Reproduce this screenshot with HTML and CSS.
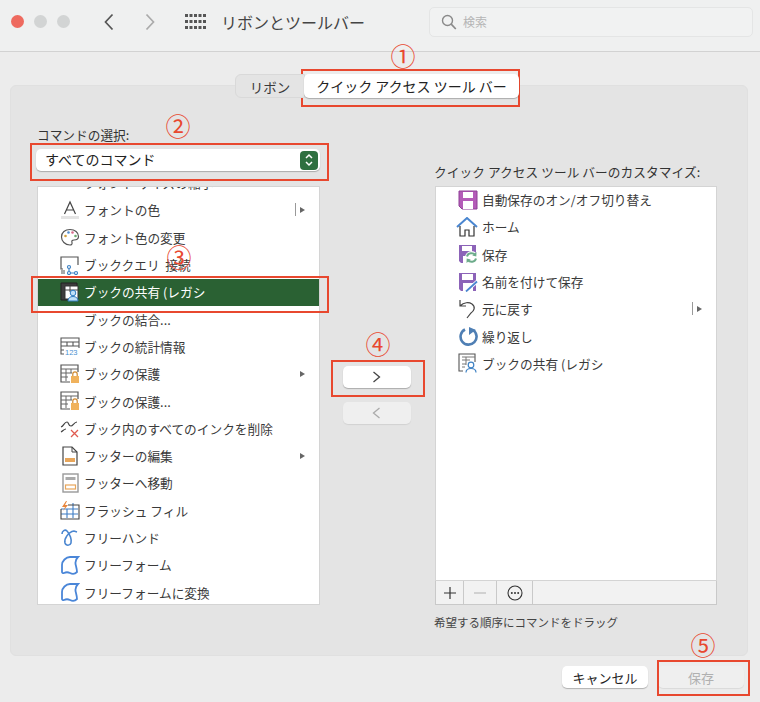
FILE: index.html
```html
<!DOCTYPE html>
<html lang="ja">
<head>
    <meta charset="UTF-8">
    <meta name="viewport" content="width=device-width, initial-scale=1.0">
    <title>リボンとツールバー</title>
    <link rel="stylesheet" href="styles.css">
</head>
<body>
    <header class="titlebar">
        <div class="lights">
            <span class="light light-red"></span>
            <span class="light"></span>
            <span class="light"></span>
        </div>
        <svg class="nav nav-back" width="12" height="18" viewBox="0 0 12 18"><path d="M9.5 1.5 2.5 9l7 7.5" fill="none" stroke="#555" stroke-width="1.7"/></svg>
        <svg class="nav nav-next" width="12" height="18" viewBox="0 0 12 18"><path d="M2.5 1.5 9.5 9l-7 7.5" fill="none" stroke="#aaa" stroke-width="1.7"/></svg>
        <svg class="grid-icon" width="21" height="15" viewBox="0 0 21 15" fill="#555">
            <rect x="0" y="0" width="3" height="3"/><rect x="4.5" y="0" width="3" height="3"/><rect x="9" y="0" width="3" height="3"/><rect x="13.5" y="0" width="3" height="3"/><rect x="18" y="0" width="3" height="3"/>
            <rect x="0" y="6" width="3" height="3"/><rect x="4.5" y="6" width="3" height="3"/><rect x="9" y="6" width="3" height="3"/><rect x="13.5" y="6" width="3" height="3"/><rect x="18" y="6" width="3" height="3"/>
            <rect x="0" y="12" width="3" height="3"/><rect x="4.5" y="12" width="3" height="3"/><rect x="9" y="12" width="3" height="3"/><rect x="13.5" y="12" width="3" height="3"/><rect x="18" y="12" width="3" height="3"/>
        </svg>
        <h1 class="title">リボンとツールバー</h1>
        <div class="search">
            <svg width="16" height="16" viewBox="0 0 16 16"><circle cx="6.5" cy="6.5" r="5" fill="none" stroke="#8a8a8a" stroke-width="1.4"/><path d="m10.2 10.2 4.6 4.8" stroke="#8a8a8a" stroke-width="1.7"/></svg>
            <span>検索</span>
        </div>
    </header>

    <main class="content">
        <div class="tabs">
            <span class="tab">リボン</span>
            <span class="tab tab-active">クイック アクセス ツール バー</span>
        </div>

        <section class="panel">
            <div class="head-left">
                <label class="field-label">コマンドの選択:</label>
                <div class="select">
                    <span>すべてのコマンド</span>
                    <span class="stepper">
                        <svg width="10" height="16" viewBox="0 0 10 16"><path d="m2 6 3-3 3 3M2 10l3 3 3-3" fill="none" stroke="#fff" stroke-width="1.5"/></svg>
                    </span>
                </div>
            </div>
            <div></div>
            <div class="head-right field-label">クイック アクセス ツール バーのカスタマイズ:</div>

            <div class="list list-left">
                <div class="row row-cut"><span class="row-icon"></span>フォント サイズの縮小</div>
                <div class="row">
                    <svg class="row-icon" viewBox="0 0 20 20"><path d="M4.5 14 10 2l5.500 12M6.500 10h7" fill="none" stroke="#444" stroke-width="1.200"/><rect x="1" y="16" width="18" height="3" fill="#e4e4e4"/></svg>
                    フォントの色<span class="split"></span><span class="arrow"></span>
                </div>
                <div class="row">
                    <svg class="row-icon" viewBox="0 0 20 20"><path d="M10 2.500c5 0 8.500 3 8.500 7 0 3-2.500 3.500-4.500 3.500-2 0-2.500 1-2 2.500.4 1.500-.5 2.500-2 2.500C5 18 1.500 14 1.500 10 1.500 5.500 5 2.500 10 2.500Z" fill="#fff" stroke="#555" stroke-width="1.200"/><circle cx="5.500" cy="9" r="1.300" fill="#d4a13c"/><circle cx="8.500" cy="5.500" r="1.300" fill="#4f8ed0"/><circle cx="12.500" cy="5.500" r="1.300" fill="#d86a8a"/><circle cx="15.500" cy="9" r="1.300" fill="#6cab70"/></svg>
                    フォント色の変更
                </div>
                <div class="row">
                    <svg class="row-icon" viewBox="0 0 20 20"><path d="M3 14H1V2h17v8" fill="none" stroke="#555" stroke-width="1.200"/><path d="M1 16h4M1 18h4" stroke="#555"/><g fill="none" stroke="#3f82c4" stroke-width="1.200"><circle cx="9" cy="12" r="1.500"/><circle cx="9" cy="18" r="1.500"/><circle cx="16" cy="18" r="1.500"/><path d="M9 13.500v3M10.500 18H14.500"/></g></svg>
                    ブッククエリ &nbsp;接続
                </div>
                <div class="row row-selected">
                    <svg class="row-icon" viewBox="0 0 20 20"><path d="M1 1h16v6H8v11H1Z" fill="#3d3d3d" stroke="#222"/><path d="M5 4h13v13H5Z" fill="#fff" stroke="#333"/><path d="M5 8h13M10 4v6" stroke="#444"/><circle cx="13" cy="11" r="2.800" fill="#bfe0f7" stroke="#2f7cc0"/><path d="M8 19c0-3 2-4.500 5-4.500s5 1.500 5 4.500Z" fill="#bfe0f7" stroke="#2f7cc0"/></svg>
                    ブックの共有 (レガシ
                </div>
                <div class="row"><span class="row-icon"></span>ブックの結合...</div>
                <div class="row">
                    <svg class="row-icon" viewBox="0 0 20 20"><path d="M4 18H1V2h18v10M1 6h18M1 10h18M7 6v4M13 6v4M1 14h3" fill="none" stroke="#555" stroke-width="1.100"/><text class="icon-num" x="5" y="19">123</text></svg>
                    ブックの統計情報
                </div>
                <div class="row">
                    <svg class="row-icon" viewBox="0 0 20 20"><use href="#sheet-lock"/></svg>
                    ブックの保護<span class="arrow arrow-only"></span>
                </div>
                <div class="row">
                    <svg class="row-icon" viewBox="0 0 20 20"><use href="#sheet-lock"/></svg>
                    ブックの保護...
                </div>
                <div class="row">
                    <svg class="row-icon" viewBox="0 0 20 20"><path d="M1 9c3-1 3-5 6-5 2 0 1 4 4 4 2 0 3-4 6-4M1 14c2-1 3-3 5-3" fill="none" stroke="#444" stroke-width="1.200"/><path d="m11 12 7 7m0-7-7 7" stroke="#e05b50" stroke-width="1.300"/></svg>
                    ブック内のすべてのインクを削除
                </div>
                <div class="row">
                    <svg class="row-icon" viewBox="0 0 20 20"><path d="M3 1h9l5 5v13H3Z" fill="#fff" stroke="#444" stroke-width="1.200"/><path d="M12 1v5h5" fill="none" stroke="#444"/><rect x="5" y="12" width="10" height="4" fill="#e8a65b"/></svg>
                    フッターの編集<span class="arrow arrow-only"></span>
                </div>
                <div class="row">
                    <svg class="row-icon" viewBox="0 0 20 20"><rect x="3" y="1" width="15" height="18" fill="#fff" stroke="#999" stroke-width="1.400"/><rect x="5.500" y="4" width="10" height="3" fill="#aaa"/><rect x="5.500" y="12" width="10" height="4" fill="none" stroke="#e8a65b" stroke-width="1.200"/></svg>
                    フッターへ移動
                </div>
                <div class="row">
                    <svg class="row-icon" viewBox="0 0 20 20"><path d="M1 9h17M1 14h17M7 9v9M13 3v15" stroke="#3f7dc4" stroke-width="1.100"/><path d="M8 5h11v14H1V9" fill="none" stroke="#444" stroke-width="1.100"/><path d="M6 1 2 7h3L3 11l5-6H5l2-4Z" fill="#e8863c"/></svg>
                    フラッシュ フィル
                </div>
                <div class="row">
                    <svg class="row-icon" viewBox="0 0 20 20"><path d="M2 6c0-3 3-5 5-3 3 3 5 9 4 12-1 3-5 3-6 0-1-4 3-11 9-12l3 1" fill="none" stroke="#4a86d0" stroke-width="1.600"/></svg>
                    フリーハンド
                </div>
                <div class="row">
                    <svg class="row-icon" viewBox="0 0 20 20"><use href="#freeform"/></svg>
                    フリーフォーム
                </div>
                <div class="row">
                    <svg class="row-icon" viewBox="0 0 20 20"><use href="#freeform"/></svg>
                    フリーフォームに変換
                </div>
            </div>

            <div class="move-buttons">
                <button class="btn move-btn" type="button">
                    <svg width="9" height="12" viewBox="0 0 9 12"><path d="m1.500 1 6 5-6 5" fill="none" stroke="#444" stroke-width="1.300"/></svg>
                </button>
                <button class="btn move-btn btn-disabled" type="button">
                    <svg width="9" height="12" viewBox="0 0 9 12"><path d="m7.500 1-6 5 6 5" fill="none" stroke="#aaa" stroke-width="1.300"/></svg>
                </button>
            </div>

            <div class="right-box">
                <div class="list list-right">
                    <div class="row">
                        <svg class="row-icon" viewBox="0 0 20 20"><path d="M1 1h18v18H4l-3-3Z" fill="#b45cb8" stroke="#8e3f96"/><rect x="5" y="2" width="10" height="6" fill="#fff"/><rect x="5" y="11" width="10" height="8" fill="#fff"/></svg>
                        自動保存のオン/オフ切り替え
                    </div>
                    <div class="row">
                        <svg class="row-icon icon-shift" viewBox="0 0 22 20"><path d="M1 10 11 1l10 9" fill="none" stroke="#4a86d0" stroke-width="2"/><path d="M4 9v10h5v-6h4v6h5V9" fill="none" stroke="#333" stroke-width="1.200"/></svg>
                        ホーム
                    </div>
                    <div class="row">
                        <svg class="row-icon" viewBox="0 0 20 20"><path d="M1 1h17v8h-6v10H3l-2-2Z" fill="#8c63b8"/><rect x="4" y="2" width="10" height="5" fill="#fff"/><rect x="5" y="12" width="5" height="7" fill="#fff"/><circle cx="13.500" cy="13.500" r="6.500" fill="#fff"/><path d="M9 12.500c1-4 6-4 8.500-1.500M18 14.500c-1 4-6 4-8.500 1.500" fill="none" stroke="#6cab8a" stroke-width="2"/><path d="m18.500 8-.2 4.500-4-1ZM8.500 19l.2-4.500 4 1Z" fill="#6cab8a"/></svg>
                        保存
                    </div>
                    <div class="row">
                        <svg class="row-icon" viewBox="0 0 20 20"><path d="M1 1h17v18H3l-2-2Z" fill="#8c63b8"/><rect x="4" y="2" width="11" height="6" fill="#fff"/><rect x="5" y="11" width="10" height="8" fill="#fff"/><path d="m8 19.500 11-10" stroke="#fff" stroke-width="3.500"/><path d="m8 19.500 11-10" stroke="#4a86d0" stroke-width="1.800"/></svg>
                        名前を付けて保存
                    </div>
                    <div class="row">
                        <svg class="row-icon" viewBox="0 0 20 20"><path d="M2 1v6h6M2 7c4-4 9-4 12-2 4 3 2 7-1 9l-4 5" fill="none" stroke="#444" stroke-width="1.200"/></svg>
                        元に戻す<span class="split"></span><span class="arrow"></span>
                    </div>
                    <div class="row">
                        <svg class="row-icon" viewBox="0 0 20 20"><path d="M7 3.500a8 8 0 1 0 8 .5" fill="none" stroke="#4f7fb4" stroke-width="2.600"/><path d="M11 1v8l4-3 3-2Z" fill="#4f7fb4"/></svg>
                        繰り返し
                    </div>
                    <div class="row">
                        <svg class="row-icon" viewBox="0 0 20 20"><path d="M5 18H1V1h16v8" fill="none" stroke="#555" stroke-width="1.100"/><path d="M4 4h13M4 7h8M4 11h4M4 14h3M8 4v8" stroke="#777"/><circle cx="13" cy="12" r="2.800" fill="none" stroke="#3f82c4" stroke-width="1.200"/><path d="M8 19.500c0-3 2-4 5-4s5 1 5 4" fill="none" stroke="#3f82c4" stroke-width="1.200"/></svg>
                        ブックの共有 (レガシ
                    </div>
                </div>
                <div class="list-tools">
                    <span class="tool tool-add">
                        <svg width="12" height="12" viewBox="0 0 12 12"><path d="M6 0v12M0 6h12" stroke="#333" stroke-width="1.200"/></svg>
                    </span>
                    <span class="tool tool-remove">
                        <svg width="12" height="12" viewBox="0 0 12 12"><path d="M0 6h12" stroke="#bbb" stroke-width="1.200"/></svg>
                    </span>
                    <span class="tool tool-more">
                        <svg width="16" height="16" viewBox="0 0 16 16"><circle cx="8" cy="8" r="7" fill="none" stroke="#333" stroke-width="1.100"/><circle cx="4.800" cy="8" r="1" fill="#333"/><circle cx="8" cy="8" r="1" fill="#333"/><circle cx="11.200" cy="8" r="1" fill="#333"/></svg>
                    </span>
                </div>
            </div>

            <div class="hint">希望する順序にコマンドをドラッグ</div>
        </section>

        <footer class="actions">
            <button class="btn action-btn" type="button">キャンセル</button>
            <button class="btn action-btn btn-disabled" type="button">保存</button>
        </footer>
    </main>

    <!-- red marks added on top of the screenshot -->
    <div class="mark mark-tab"></div>
    <div class="mark mark-select"></div>
    <div class="mark mark-row"></div>
    <div class="mark mark-move"></div>
    <div class="mark mark-save"></div>
    <span class="num num-1">①</span>
    <span class="num num-2">②</span>
    <span class="num num-3">③</span>
    <span class="num num-4">④</span>
    <span class="num num-5">⑤</span>

    <svg class="defs" width="0" height="0">
        <symbol id="sheet-lock" viewBox="0 0 20 20">
            <path d="M10 18H1V1h17v7" fill="none" stroke="#555" stroke-width="1.200"/>
            <path d="M1 5h17M1 9h11M1 13h7M6 5v12M11 5v4" stroke="#666"/>
            <rect x="11" y="12" width="8" height="7" fill="#f0b25c"/>
            <path d="M12.800 12V10a2.200 2.200 0 0 1 4.400 0v2" fill="none" stroke="#d08a30" stroke-width="1.200"/>
        </symbol>
        <symbol id="freeform" viewBox="0 0 20 20">
            <path d="M2 17V10C2 6 6 2 10 2h8c-3 3-3 6-2 9 .5 2 1 4 1 6-2 2-5 2-7 1s-4-1-6 0c-1 .5-2 0-2-1Z" fill="none" stroke="#4a86d8" stroke-width="1.800"/>
        </symbol>
    </svg>
</body>
</html>
```

FILE: styles.css
```css
* {
    box-sizing: border-box;
}

html, body {
    margin: 0;
    height: 702px;
}

body {
    position: relative;
    overflow: hidden;
    font-family: "Noto Sans CJK JP", "Liberation Sans", sans-serif;
    font-size: 12.7px;
    color: #3a3a3a;
    background: #ececec;
}

/* title bar */
.titlebar {
    display: flex;
    align-items: center;
    height: 52px;
    padding: 0 7px 8px 11px;
    background: #eff0f0;
    border-bottom: 1px solid #d2d2d2;
}

.lights {
    display: flex;
    gap: 10px;
}

.light {
    width: 13px;
    height: 13px;
    border-radius: 50%;
    background: #d2d4d4;
}

.light-red {
    background: #ee6a5f;
}

.nav-back {
    margin-left: 33px;
}

.nav-next {
    margin-left: 29px;
}

.grid-icon {
    margin-left: 29px;
}

.title {
    margin: 0 0 0 15px;
    font-size: 16px;
    font-weight: 400;
    color: #444;
}

.search {
    display: flex;
    align-items: center;
    gap: 6px;
    width: 324px;
    height: 30px;
    margin-left: auto;
    padding-left: 11px;
    font-size: 12px;
    color: #b5b5b5;
    background: #f1f2f2;
    border: 1px solid #e4e5e5;
    border-radius: 5px;
}

/* tabs and panel */
.content {
    padding: 22px 12px 0 10px;
}

.tabs {
    position: relative;
    z-index: 1;
    display: flex;
    justify-content: center;
    height: 24px;
    margin: 0 4px -13px 0;
}

.tab {
    width: 70px;
    height: 24px;
    font-size: 13.5px;
    line-height: 24px;
    text-align: center;
    background: #e4e4e4;
    border: 1px solid #d9d9d9;
    border-radius: 6px 0 0 6px;
}

.tab-active {
    width: 215px;
    margin-left: -1px;
    font-size: 14px;
    color: #222;
    background: #fff;
    border: 0;
    border-radius: 5px;
    box-shadow: 0 1px 1px rgba(0, 0, 0, 0.25);
}

.panel {
    display: grid;
    grid-template-columns: 283px 115px 282px;
    grid-template-rows: 57px auto auto;
    align-content: start;
    height: 571px;
    padding: 43px 31px 0 26px;
    background: #e4e4e4;
    border: 1px solid #e0e0e0;
    border-radius: 6px;
}

.field-label {
    display: block;
    height: 16px;
    font-size: 12.7px;
    line-height: 16px;
    color: #333;
}

.head-left .field-label {
    margin: -2px 0 6px;
}

.head-right {
    align-self: end;
    margin: 0 0 6px -1px;
    letter-spacing: 0.06px;
    white-space: nowrap;
}

.select {
    display: flex;
    align-items: center;
    justify-content: space-between;
    height: 22px;
    margin-left: -1px;
    padding: 0 2px 3px 9px;
    font-size: 14px;
    color: #222;
    background: #fff;
    border-radius: 5px;
    box-shadow: 0 1px 1px rgba(0, 0, 0, 0.25);
}

.stepper {
    display: flex;
    align-items: center;
    justify-content: center;
    width: 18px;
    height: 19px;
    margin-top: 3px;
    background: #2f7040;
    border-radius: 4px;
}

/* command lists */
.list {
    overflow: hidden;
    background: #fff;
    border: 1px solid #d4d4d4;
}

.list-left {
    height: 419px;
}

.right-box {
    display: flex;
    flex-direction: column;
    height: 419px;
}

.list-right {
    flex: 1;
}

.row {
    display: flex;
    align-items: center;
    height: 27.3px;
    padding: 0 0 2px 22px;
    color: #3a3a3a;
    white-space: nowrap;
}

.row-cut {
    margin-top: -17px;
}

.row-icon {
    flex: none;
    width: 20px;
    height: 20px;
    margin-right: 4px;
}

.icon-shift {
    width: 22px;
    margin-left: -2px;
}

.icon-num {
    font-family: "Liberation Sans", sans-serif;
    font-size: 7.500px;
    fill: #4a90d0;
}

.row-selected {
    color: #fff;
    background: #2a6133;
}

.split {
    width: 1px;
    height: 13px;
    margin-left: auto;
    background: #999;
}

.arrow {
    width: 0;
    height: 0;
    margin: 0 14px 0 4px;
    border-left: 5px solid #666;
    border-top: 3.500px solid transparent;
    border-bottom: 3.500px solid transparent;
}

.arrow-only {
    margin-left: auto;
}

.list-tools {
    display: flex;
    height: 24px;
    background: #f2f2f2;
    border: 1px solid #c9c9c9;
    border-top: 0;
}

.tool {
    display: flex;
    align-items: center;
    justify-content: center;
    height: 100%;
    border-right: 1px solid #c9c9c9;
}

.tool-add {
    width: 28px;
}

.tool-remove {
    width: 33px;
}

.tool-more {
    width: 36px;
}

.hint {
    grid-column: 3;
    margin: 9px 0 0 -1px;
    font-size: 11.5px;
    line-height: 16px;
    color: #444;
}

/* buttons */
.move-buttons {
    display: flex;
    flex-direction: column;
    align-items: center;
    gap: 14px;
    padding: 180px 2px 0 0;
}

.btn {
    display: flex;
    align-items: center;
    justify-content: center;
    height: 22px;
    padding: 0;
    font-family: inherit;
    color: #222;
    background: #fff;
    border: 0;
    border-radius: 5px;
    box-shadow: 0 1px 1px rgba(0, 0, 0, 0.25);
}

.move-btn {
    width: 68px;
}

.btn-disabled {
    color: #b0b0b0;
    background: #efefef;
    box-shadow: 0 1px 1px rgba(0, 0, 0, 0.08);
}

.actions {
    display: flex;
    justify-content: flex-end;
    gap: 10px;
    padding: 10px 4px 0 0;
}

.action-btn {
    width: 86px;
    font-size: 13px;
}

/* red marks */
.mark {
    position: absolute;
    border: 2px solid #e8482f;
}

.mark-tab {
    left: 301px;
    top: 69px;
    width: 219px;
    height: 38px;
}

.mark-select {
    left: 30px;
    top: 143px;
    width: 299px;
    height: 38px;
}

.mark-row {
    left: 31px;
    top: 276px;
    width: 298px;
    height: 37px;
}

.mark-move {
    left: 331px;
    top: 360px;
    width: 94px;
    height: 37px;
}

.mark-save {
    left: 657px;
    top: 660px;
    width: 93px;
    height: 36px;
}

.num {
    position: absolute;
    width: 30px;
    font-size: 25px;
    line-height: 30px;
    text-align: center;
    color: #e8482f;
}

.num-1 {
    left: 388px;
    top: 40px;
}

.num-2 {
    left: 163px;
    top: 110px;
}

.num-3 {
    left: 164px;
    top: 241px;
}

.num-4 {
    left: 363px;
    top: 328px;
}

.num-5 {
    left: 688px;
    top: 629px;
}

.defs {
    position: absolute;
}
```
